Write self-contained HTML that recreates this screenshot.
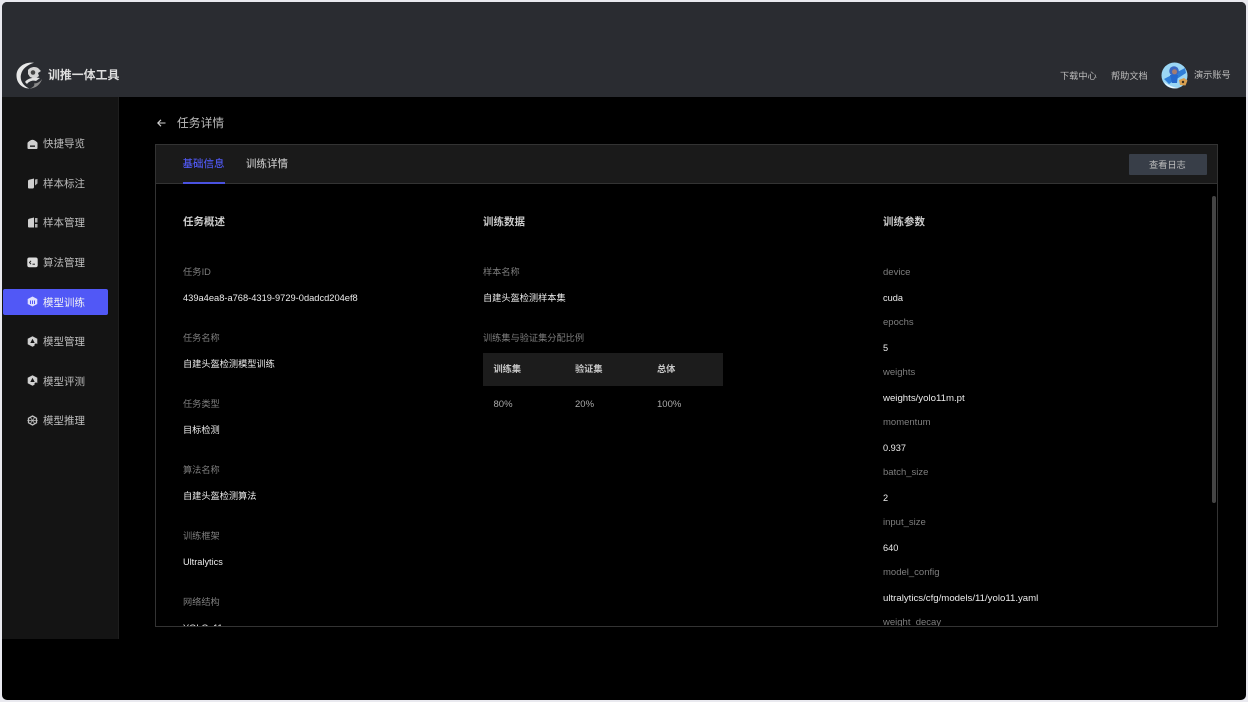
<!DOCTYPE html>
<html lang="zh"><head><meta charset="utf-8"><style>
*{margin:0;padding:0;box-sizing:border-box}
html,body{width:1248px;height:702px;overflow:hidden;background:#e9e9ef}
body{font-family:"Liberation Sans","Noto Sans CJK SC",sans-serif;position:relative}
#win{position:absolute;left:2px;top:2px;width:1244px;height:698px;background:#000;border-radius:5px;overflow:hidden}
.t{position:absolute;white-space:nowrap;line-height:14px;color:#ececec;font-size:9.2px;filter:blur(.25px)}
.l{color:#7e7e7e}.h{font-size:10.5px;color:#cacaca;font-weight:700}
.n{color:#bdbdbd;font-size:10.5px}
.ic{position:absolute;left:27px;width:11px;height:11px;filter:blur(.2px)}
</style></head><body>
<div id="win"></div>
<div style="position:absolute;left:2px;top:2px;width:1244px;height:95px;background:#2a2c31;border-radius:5px 5px 0 0"></div>
<div style="position:absolute;left:2px;top:97px;width:117px;height:542px;background:#141414;border-right:1px solid #1e1e1e"></div>

<svg style="position:absolute;left:16px;top:62px;filter:blur(.3px)" width="27" height="27" viewBox="0 0 27 27"><path d="M18 .8C9 -.5 .5 5 .5 13.500C.5 21 6 26.500 13.500 26.500C8 24.500 3.500 19 5 12.500C6.200 7 11 3 18 .8Z" fill="#e8e8e8"/><path d="M13.500 26.500C19.500 26.500 24.500 22.500 26 17C24 20 21 21.500 18 21.500C19.500 23.500 16.500 25.800 13.500 26.500Z" fill="#8c8c8c"/><path d="M12 8C14 5 19 4 22 6L25 9 22 11 23 14 19 17 14 15 12 12Z" fill="#d4d4d4"/><circle cx="17" cy="10.500" r="2.300" fill="#444"/><path d="M9 20C12 16 18 15 24 16L20 19C17 18 13 19 11 22Z" fill="#e2e2e2"/></svg>
<div class="t" style="left:48px;top:68px;font-size:11.900px;font-weight:700;color:#dedede">训推一体工具</div>

<div class="t n" style="left:1060px;top:68.500px;font-size:9.200px">下载中心</div>
<div class="t n" style="left:1111px;top:68.500px;font-size:9.200px">帮助文档</div>
<svg style="position:absolute;left:1161px;top:62px;filter:blur(.3px)" width="27" height="27" viewBox="0 0 27 27"><circle cx="13.500" cy="13.500" r="13" fill="#9ad6f4"/><path d="M3 17L24 6 25 11 8 22Z" fill="#2f7fd8"/><circle cx="13" cy="9" r="4.800" fill="#3a67c0"/><circle cx="13.500" cy="9.800" r="2.500" fill="#a37c70"/><path d="M9 13H17L16 21H11Z" fill="#2468cc"/><path d="M18 18L23 16 26.500 18.500 24.500 23.500 19 23Z" fill="#d9a050"/><circle cx="22" cy="20" r="1.200" fill="#3b2f20"/><path d="M3 20C8 24 14 26 18 26 10 27.500 5 24 3 20Z" fill="#f0f9fd"/></svg>
<div class="t n" style="left:1194px;top:68px;font-size:9.200px">演示账号</div>

<div style="position:absolute;left:3px;top:289px;width:105px;height:26px;background:#5158f6;border-radius:2px"></div>

<svg class="ic" style="top:139px" viewBox="0 0 11 11"><path d="M5.500 .8C7 .8 9.500 2.500 10.500 3.800V9A1 1 0 0 1 9.500 10H1.500A1 1 0 0 1 .5 9V3.800C1.500 2.500 4 .8 5.500 .8Z" fill="#d0d0d0"/><rect x="3" y="6.500" width="5" height="1.300" fill="#141414"/></svg>
<svg class="ic" style="top:178px" viewBox="0 0 11 11"><path d="M1 3.200C1 2.500 1.500 2 2 1.800L7 .5V9C7 9.800 6.500 10.300 6 10.500H2C1.400 10.500 1 10 1 9.500Z" fill="#d0d0d0"/><path d="M8 1.500L10.500 1V5.500L8 7.500Z" fill="#b0b0b0"/></svg>
<svg class="ic" style="top:217px" viewBox="0 0 11 11"><path d="M1 3.200C1 2.500 1.500 2 2 1.800L7 .5V10.500H2C1.400 10.500 1 10 1 9.500Z" fill="#d0d0d0"/><path d="M8 1H10.500V5.500H8ZM8 7H10.500V10.500H8Z" fill="#b0b0b0"/></svg>
<svg class="ic" style="top:257px" viewBox="0 0 11 11"><rect x=".3" y=".5" width="10.400" height="9.800" rx="2" fill="#dcdcdc"/><path d="M4 3.800L2.500 5.500 4 7.200" stroke="#222" fill="none"/><path d="M5.500 7.200H8" stroke="#222"/></svg>
<svg class="ic" style="top:296px" viewBox="0 0 11 11"><path d="M5.500 .5L10.300 3V8L5.500 10.500.7 8V3Z" fill="#dfe0ff"/><path d="M3.500 4.500V8M5.500 4.500V8M7.500 4.500V8" stroke="#5158f6"/></svg>
<svg class="ic" style="top:336px" viewBox="0 0 11 11"><path d="M5.500 .3L10.300 2.800V8.200L5.500 10.700.7 8.200V2.800Z" fill="#d0d0d0"/><path d="M5.500 2.800L3.300 7H7.700Z" fill="#141414"/><circle cx="9" cy="9" r="1.500" fill="#141414"/></svg>
<svg class="ic" style="top:375px" viewBox="0 0 11 11"><path d="M5.500 .3L10.300 2.800V8.200L5.500 10.700.7 8.200V2.800Z" fill="#d0d0d0"/><path d="M5.500 2.800L3.300 7H7.700Z" fill="#141414"/><circle cx="9" cy="9" r="1.500" fill="#141414"/></svg>
<svg class="ic" style="top:415px" viewBox="0 0 11 11"><path d="M5.500 1L9.500 3.200V7.800L5.500 10 1.500 7.800V3.200Z" fill="none" stroke="#c0c0c0" stroke-width="1.300"/><path d="M.3 5.500H10.700M3 2L8 9M8 2L3 9" stroke="#c0c0c0" stroke-width=".7"/></svg>

<div class="t n" style="left:43px;top:137px">快捷导览</div>
<div class="t n" style="left:43px;top:177px">样本标注</div>
<div class="t n" style="left:43px;top:216px">样本管理</div>
<div class="t n" style="left:43px;top:256px">算法管理</div>
<div class="t n" style="left:43px;top:295.500px;color:#f4f4f4">模型训练</div>
<div class="t n" style="left:43px;top:334.500px">模型管理</div>
<div class="t n" style="left:43px;top:374.500px">模型评测</div>
<div class="t n" style="left:43px;top:413.500px">模型推理</div>

<svg style="position:absolute;left:156px;top:118px" width="11" height="11" viewBox="0 0 11 11"><path d="M9.500 5H2M5 1.800L1.800 5 5 8.200" fill="none" stroke="#d0d0d0" stroke-width="1.100"/></svg>
<div class="t" style="left:177px;top:116px;font-size:11.800px;color:#bcbcbc">任务详情</div>

<div style="position:absolute;left:155px;top:144px;width:1063px;height:483px;border:1px solid #333;background:#000;overflow:hidden">
 <div style="position:absolute;left:0;top:0;width:1061px;height:39px;background:#1a1a1a;border-bottom:1px solid #333"></div>
 <div style="position:absolute;left:26.500px;top:37px;width:42px;height:2px;background:#4a52e0"></div>
 <div class="t" style="left:26.500px;top:12px;font-size:10.500px;color:#4f57ee;font-weight:500">基础信息</div>
 <div class="t" style="left:90px;top:12px;font-size:10.500px;color:#bdbdbd;font-weight:500">训练详情</div>
 <div style="position:absolute;left:973px;top:9px;width:78px;height:21px;background:#383e48;border-radius:1px"></div>
 <div class="t" style="left:993px;top:13px;font-size:9.200px;color:#bdbdbd">查看日志</div>
 <div style="position:absolute;left:1056px;top:51px;width:4px;height:307px;background:#444;border-radius:2px"></div>

 <div class="t h" style="left:27px;top:70px">任务概述</div>
 <div class="t l" style="left:27px;top:120px;font-size:9.300px">任务ID</div>
 <div class="t" style="left:27px;top:146px;font-size:9.300px">439a4ea8-a768-4319-9729-0dadcd204ef8</div>
 <div class="t l" style="left:27px;top:186px">任务名称</div>
 <div class="t" style="left:27px;top:212px">自建头盔检测模型训练</div>
 <div class="t l" style="left:27px;top:252px">任务类型</div>
 <div class="t" style="left:27px;top:278px">目标检测</div>
 <div class="t l" style="left:27px;top:318px">算法名称</div>
 <div class="t" style="left:27px;top:344px">自建头盔检测算法</div>
 <div class="t l" style="left:27px;top:384px">训练框架</div>
 <div class="t" style="left:27px;top:410px">Ultralytics</div>
 <div class="t l" style="left:27px;top:450px">网络结构</div>
 <div class="t" style="left:27px;top:476px">YOLOv11m</div>

 <div class="t h" style="left:327px;top:70px">训练数据</div>
 <div class="t l" style="left:327px;top:120px">样本名称</div>
 <div class="t" style="left:327px;top:146px">自建头盔检测样本集</div>
 <div class="t l" style="left:327px;top:186px">训练集与验证集分配比例</div>
 <div style="position:absolute;left:327px;top:208px;width:240px;height:33px;background:#1c1c1c"></div>
 <div class="t" style="left:337.500px;top:217px;color:#c8c8c8;font-weight:700">训练集</div>
 <div class="t" style="left:419px;top:217px;color:#c8c8c8;font-weight:700">验证集</div>
 <div class="t" style="left:501px;top:217px;color:#c8c8c8;font-weight:700">总体</div>
 <div class="t" style="left:337.500px;top:252.600px;color:#aaa;font-size:9.500px">80%</div>
 <div class="t" style="left:419px;top:252.600px;color:#aaa;font-size:9.500px">20%</div>
 <div class="t" style="left:501px;top:252.600px;color:#aaa;font-size:9.500px">100%</div>

 <div class="t h" style="left:727px;top:70px">训练参数</div>
 <div class="t l" style="left:727px;top:120.600px;font-size:9.500px">device</div>
 <div class="t" style="left:727px;top:146px">cuda</div>
 <div class="t l" style="left:727px;top:170.600px;font-size:9.500px">epochs</div>
 <div class="t" style="left:727px;top:196px">5</div>
 <div class="t l" style="left:727px;top:220.600px;font-size:9.500px">weights</div>
 <div class="t" style="left:727px;top:246.600px;font-size:9.650px">weights/yolo11m.pt</div>
 <div class="t l" style="left:727px;top:270.600px;font-size:9.500px">momentum</div>
 <div class="t" style="left:727px;top:296px">0.937</div>
 <div class="t l" style="left:727px;top:320.600px;font-size:9.500px">batch_size</div>
 <div class="t" style="left:727px;top:346px">2</div>
 <div class="t l" style="left:727px;top:370.600px;font-size:9.500px">input_size</div>
 <div class="t" style="left:727px;top:396px">640</div>
 <div class="t l" style="left:727px;top:420.600px;font-size:9.500px">model_config</div>
 <div class="t" style="left:727px;top:446.600px;font-size:9.650px">ultralytics/cfg/models/11/yolo11.yaml</div>
 <div class="t l" style="left:727px;top:470.600px;font-size:9.500px">weight_decay</div>
</div>
</body></html>
